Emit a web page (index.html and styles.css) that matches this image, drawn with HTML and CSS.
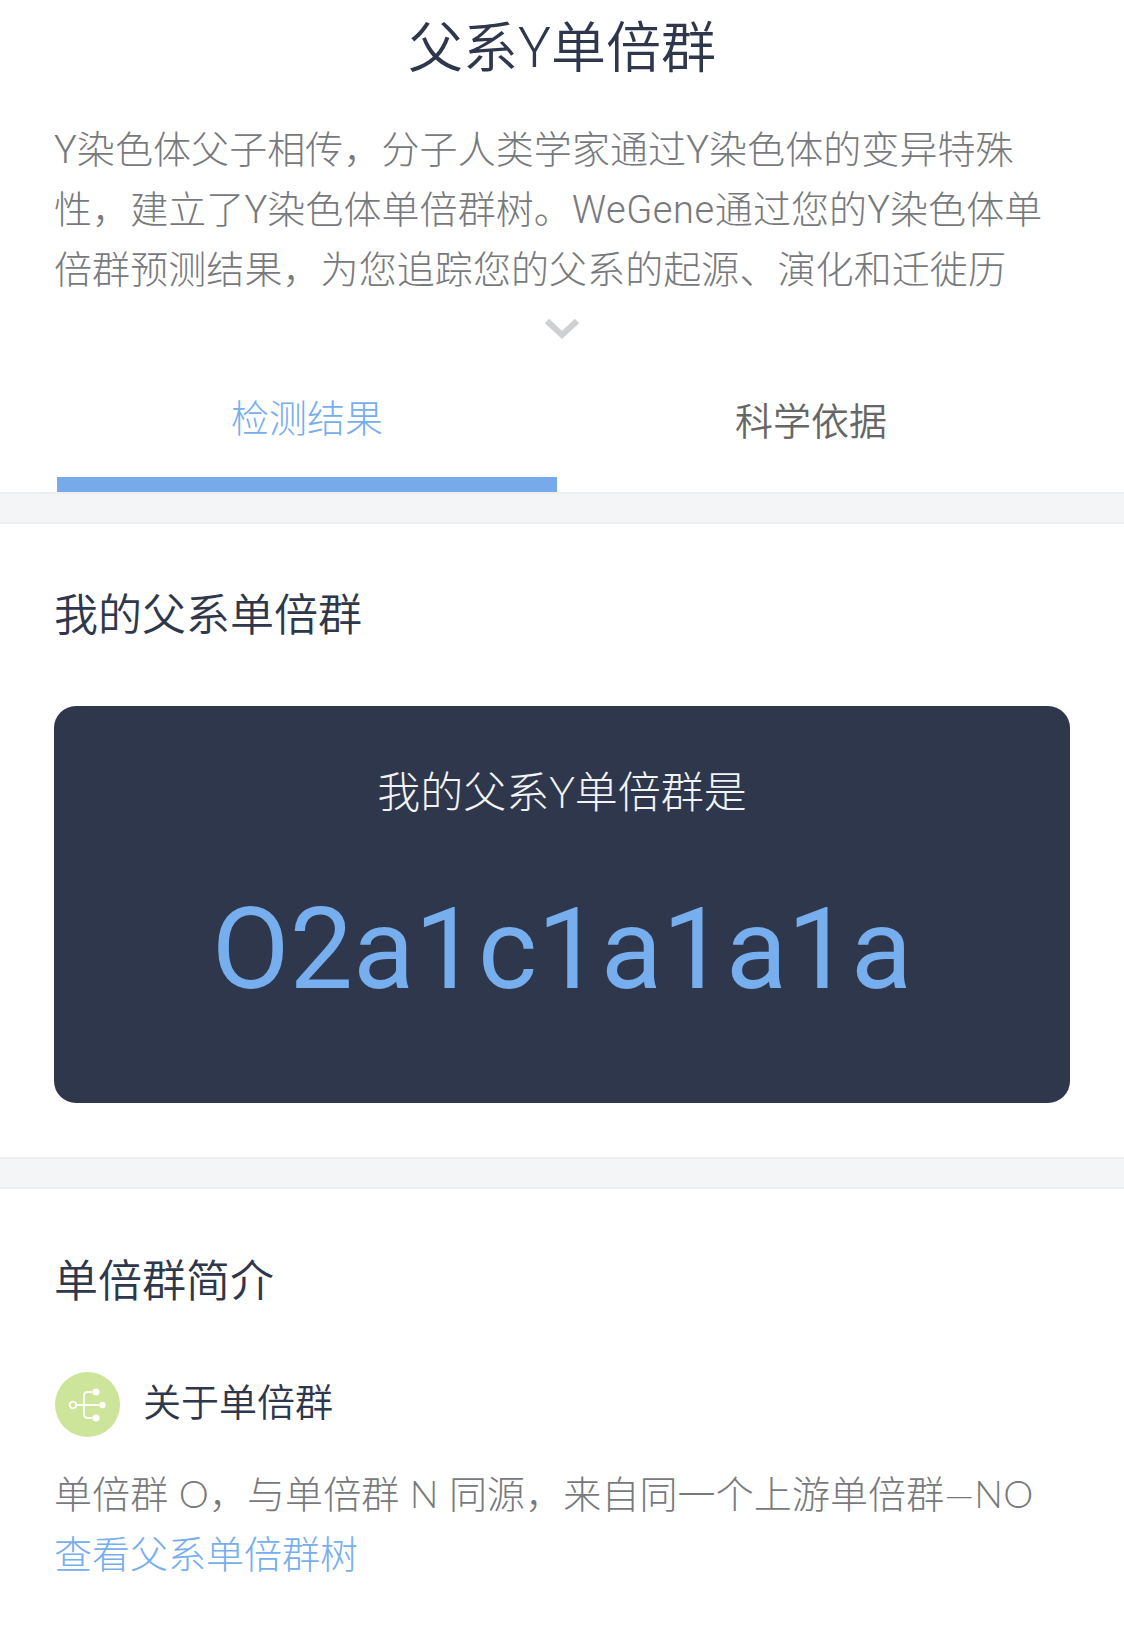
FILE: index.html
```html
<!DOCTYPE html>
<html lang="zh-CN">
<head>
    <meta charset="utf-8">
    <title>父系Y单倍群</title>
    <link rel="stylesheet" href="styles.css">
</head>
<body>
    <div class="page-header">
        <h1>父系Y单倍群</h1>
        <p class="intro">Y染色体父子相传，分子人类学家通过Y染色体的变异特殊<br>性，建立了Y染色体单倍群树。<span class="brand">WeGene</span>通过您的Y染色体单<br>倍群预测结果，为您追踪您的父系的起源、演化和迁徙历</p>
        <div class="expand">
            <svg width="36" height="22" viewBox="0 0 36 22"><path d="M3 3 L18 17 L33 3" fill="none" stroke="#cfd0d2" stroke-width="6"/></svg>
        </div>
    </div>

    <div class="tabs">
        <div class="tab active">检测结果</div>
        <div class="tab second">科学依据</div>
    </div>
    <div class="band"></div>

    <div class="section result-section">
        <h2>我的父系单倍群</h2>
        <div class="result-card">
            <div class="result-label">我的父系Y单倍群是</div>
            <div class="result-value">O2a1c1a1a1a</div>
        </div>
    </div>
    <div class="band"></div>

    <div class="section intro-section">
        <h2>单倍群简介</h2>
        <div class="about-row">
            <div class="about-icon">
                <svg width="65" height="65" viewBox="0 0 65 65" fill="none" stroke="#fff" stroke-width="1.8">
                    <circle cx="18" cy="33" r="3.3"/>
                    <path d="M21.5 33 H44"/>
                    <path d="M37 20 H33 Q29 20 29 24 V42 Q29 46 33 46 H37"/>
                    <circle cx="41" cy="20" r="3.6" fill="#fff" stroke="none"/>
                    <circle cx="47.5" cy="33" r="3.2" fill="#fff" stroke="none"/>
                    <circle cx="41" cy="46" r="3.6" fill="#fff" stroke="none"/>
                </svg>
            </div>
            <div class="about-title">关于单倍群</div>
        </div>
        <p class="about-text">单倍群 O，与单倍群 N 同源，来自同一个上游单倍群—NO</p>
        <a class="tree-link" href="#">查看父系单倍群树</a>
    </div>
</body>
</html>
```

FILE: styles.css
```css
body {
    margin: 0;
    background-color: white;
    font-family: Roboto, "Noto Sans CJK SC", sans-serif;
    font-weight: 300;
    color: #2e374b;
    overflow: hidden;
}
h1 {
    margin: 0;
    font-size: 55px;
    font-weight: 350;
    line-height: 96px;
    text-align: center;
}
h2 {
    margin: 0;
    font-size: 44px;
    font-weight: 350;
    line-height: 60px;
}
.page-header {
    padding: 0 54px;
}
.intro {
    margin: 24px 0 0 0;
    font-size: 38px;
    line-height: 60px;
    letter-spacing: 0.08px;
    color: #77797d;
    white-space: nowrap;
}
.brand {
    letter-spacing: 0.6px;
}
.expand {
    height: 60px;
    padding-top: 18px;
    text-align: center;
    box-sizing: border-box;
}
.tabs {
    display: flex;
    gap: 4px;
    height: 132px;
    padding: 0 63px 0 57px;
}
.tab {
    flex: 1;
    padding-top: 29px;
    font-size: 38px;
    line-height: 60px;
    text-align: center;
    color: #666;
    box-sizing: border-box;
}
.tab.second {
    padding-top: 32px;
    font-weight: 350;
}
.tab.active {
    color: #76aeee;
    border-bottom: 15px solid #76aaea;
}
.band {
    height: 32px;
    background-color: #f4f5f7;
    border-top: 2px solid #eceef0;
    border-bottom: 2px solid #eceef0;
    box-sizing: border-box;
}
.section {
    padding: 62px 54px 0 54px;
}
.result-section {
    height: 633px;
    box-sizing: border-box;
}
.intro-section {
    padding-top: 63px;
}
.result-card {
    height: 397px;
    margin-top: 60px;
    border-radius: 22px;
    background-color: #2e374b;
    text-align: center;
}
.result-label {
    padding-top: 56px;
    font-family: Lato, "Noto Sans CJK SC", sans-serif;
    font-size: 43px;
    line-height: 60px;
    color: #f2f3f5;
}
.result-value {
    margin-top: 63px;
    font-size: 113px;
    font-weight: 400;
    line-height: 130px;
    color: #76aeee;
}
.about-row {
    display: flex;
    align-items: center;
    margin-top: 60px;
}
.about-icon {
    width: 65px;
    height: 65px;
    margin-left: 1px;
    border-radius: 50%;
    background-color: #cde49b;
}
.about-icon svg {
    display: block;
}
.about-title {
    margin-left: 23px;
    padding-bottom: 10px;
    font-size: 38px;
    font-weight: 350;
}
.about-text {
    margin: 26px 0 0 0;
    font-family: Lato, "Noto Sans CJK SC", sans-serif;
    font-size: 38px;
    line-height: 60px;
    letter-spacing: 0.1px;
    color: #77797d;
    white-space: nowrap;
}
.tree-link {
    display: block;
    margin-top: 2px;
    font-size: 38px;
    line-height: 60px;
    color: #76aeee;
    text-decoration: none;
}
```
